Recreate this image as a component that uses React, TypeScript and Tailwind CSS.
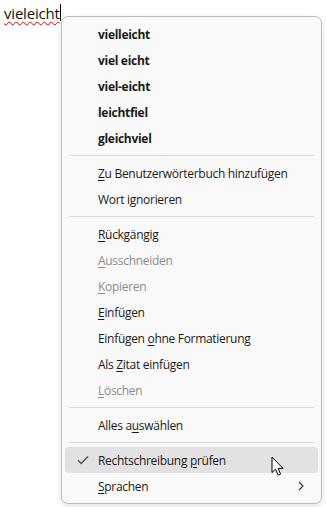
import React from "react";

type Item = {
  label: React.ReactNode;
  bold?: boolean;
  disabled?: boolean;
  checked?: boolean;
  active?: boolean;
  submenu?: boolean;
};

const U = ({ children }: { children: React.ReactNode }) => (
  <span className="underline underline-offset-2">{children}</span>
);

const groups: Item[][] = [
  [
    { label: "vielleicht", bold: true },
    { label: "viel eicht", bold: true },
    { label: "viel-eicht", bold: true },
    { label: "leichtfiel", bold: true },
    { label: "gleichviel", bold: true },
  ],
  [
    { label: <><U>Z</U>u Benutzerwörterbuch hinzufügen</> },
    { label: "Wort ignorieren" },
  ],
  [
    { label: <><U>R</U>ückgängig</> },
    { label: <><U>A</U>usschneiden</>, disabled: true },
    { label: <><U>K</U>opieren</>, disabled: true },
    { label: <><U>E</U>infügen</> },
    { label: <>Einfügen <U>o</U>hne Formatierung</> },
    { label: <>Als <U>Z</U>itat einfügen</> },
    { label: <><U>L</U>öschen</>, disabled: true },
  ],
  [{ label: <>Alles a<U>u</U>swählen</> }],
  [
    { label: <>Rechtschreibung <U>p</U>rüfen</>, checked: true, active: true },
    { label: <><U>S</U>prachen</>, submenu: true },
  ],
];

function MenuRow({ item }: { item: Item }) {
  return (
    <div
      className={
        "mx-[3px] h-[26px] flex items-center rounded-[4px] relative " +
        (item.active ? "bg-[#e2e2e2]" : "")
      }
    >
      <div className="w-[33px] flex justify-center pl-[2px]">
        {item.checked && (
          <svg width="12" height="10" viewBox="0 0 12 10" fill="none">
            <path d="M1 5.2 L4.2 8.4 L11 1.4" stroke="#555" strokeWidth="1.4" />
          </svg>
        )}
      </div>
      <span
        className={
          "text-[12px] leading-none tracking-[-0.3px] pt-[1px] " +
          (item.bold ? "font-bold " : "") +
          (item.disabled ? "text-[#8c8c8c]" : "text-[#1b1b1b]")
        }
      >
        {item.label}
      </span>
      {item.submenu && (
        <svg className="absolute right-[14px] top-[8px]" width="6" height="10" viewBox="0 0 6 10" fill="none">
          <path d="M1 1 L5 5 L1 9" stroke="#333" strokeWidth="1.1" />
        </svg>
      )}
    </div>
  );
}

export default function App() {
  return (
    <div
      className="relative w-[327px] h-[507px] bg-white overflow-hidden"
      style={{ fontFamily: '"Open Sans", "Noto Sans", sans-serif' }}
    >
      <div className="absolute left-[4px] top-[3px] flex items-start">
        <span className="text-[15px] leading-[20px] tracking-[-0.2px] text-[#111] underline decoration-wavy decoration-[#e00000] decoration-1 underline-offset-[2px]">
          vieleicht
        </span>
        <span className="w-px h-[17px] bg-black mt-[1px]" />
      </div>

      <div className="absolute left-[61px] top-[16px] w-[261px] rounded-[7px] border border-[#bdbdbd] bg-[#f9f9f9] shadow-[0_2px_6px_rgba(0,0,0,0.12)] pt-[4px] pb-[4px]">
        {groups.map((g, gi) => (
          <div key={gi}>
            {gi > 0 && (
              <div className="h-[9px] flex items-center px-[7px]">
                <div className="h-px w-full bg-[#dadada]" />
              </div>
            )}
            {g.map((it, ii) => (
              <MenuRow key={ii} item={it} />
            ))}
          </div>
        ))}
      </div>

      <svg className="absolute left-[271px] top-[456px]" width="14" height="22" viewBox="0 0 14 22">
        <path
          d="M1 1 L1 16.5 L4.6 13.2 L7.2 19.2 L9.6 18.1 L7.1 12.4 L12 12.4 Z"
          fill="#fff"
          stroke="#000"
          strokeWidth="1"
          strokeLinejoin="round"
        />
      </svg>
    </div>
  );
}
